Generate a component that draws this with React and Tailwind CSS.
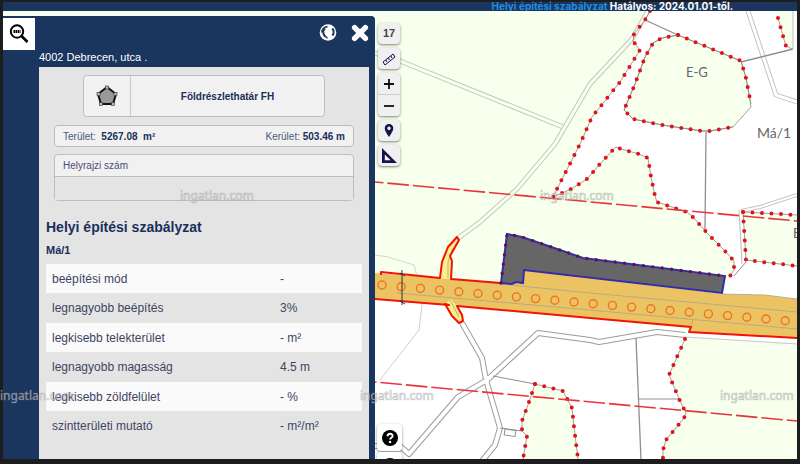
import { useState } from 'react';

const RULES = [
  { label: 'beépítési mód', value: '-' },
  { label: 'legnagyobb beépítés', value: '3%' },
  { label: 'legkisebb telekterület', value: '- m²' },
  { label: 'legnagyobb magasság', value: '4.5 m' },
  { label: 'legkisebb zöldfelület', value: '- %' },
  { label: 'szintterületi mutató', value: '- m²/m²' },
];

const WATERMARKS = [
  { x: 180, y: 200 },
  { x: 540, y: 200 },
  { x: 0, y: 400 },
  { x: 360, y: 400 },
  { x: 720, y: 400 },
];

const GREEN = '#f7ffed';
const EG = '678,35 741,61 746,78 749,94 751,107 733,127 710,131 702,131 662,125 633,119 624,110 635,84 645,57 653,43 662,38';
const VALLEY = '650,11 645,20 634,34 633,41 640,50 620,82 592,117 580,144 557,189 553,197 571,189 587,179 600,164 613,150 616,147 621,149 639,154 648,158 651,177 655,196 657,202 669,206 678,209 687,212 694,218 707,233 727,253 734,261 734,270 730,276';

// a zone border: thin grey line with evenly spaced red dots on it
function Dotted({ points }) {
  return (
    <g fill="none">
      <polyline points={points} stroke="#8a8a80" strokeWidth="0.8" />
      <polyline points={points} stroke="#e3111b" strokeWidth="4" strokeLinecap="round" strokeDasharray="0 9.5" />
    </g>
  );
}

// a road: wide grey line with the ground colour laid over it
function Road({ points, edge = '#c3c6bd', ground = GREEN, width = 5 }) {
  return (
    <g fill="none" strokeLinejoin="round">
      <polyline points={points} stroke={edge} strokeWidth={width} />
      <polyline points={points} stroke={ground} strokeWidth={width - 2} />
    </g>
  );
}

function ZoningMap() {
  const trees = Array.from({ length: 22 }, (_, i) => i);
  return (
    <svg
      className="absolute inset-0 h-full w-full"
      viewBox="3 11 794 448"
      preserveAspectRatio="xMinYMin slice"
      role="img"
      aria-label="Szabályozási térkép"
    >
      <rect x="3" y="11" width="794" height="448" fill={GREEN} />

      {/* white zones */}
      <polygon points={`${VALLEY} 724,294 797,299 797,11`} fill="#fff" />
      <polygon points="3,285 375,299 590,318 689,330 685,339 669,375 686,413 664,443 663,459 3,459" fill="#fff" />
      <polygon points="689,330 797,338 797,343 685,338" fill="#fff" />

      {/* green patches inside the white ones */}
      <polygon points={EG} fill={GREEN} />
      <polygon points="775,11 778,18 786,46 793,49 793,11" fill={GREEN} />
      <polygon points="743,212 797,216 797,266 746,260" fill={GREEN} />
      <polygon points="535,384 563,391 572,408 578,459 523,459 527,436 522,431 522,421" fill={GREEN} />

      <Road points="375,53 400,61 563,127" />
      <Road points="457,239 480,222 517,189 555,144 590,84 632,39 648,11" />
      <Road points="748,11 776,95 797,102" ground="#fff" />
      <Road points="741,211 760,207 797,195" ground="#fff" width={4} />
      <polyline points="739,210 742,264" fill="none" stroke="#bbb" />
      <Road points="462,323 482,358 486,380 500,428 495,445 482,461" edge="#9c9c9c" ground="#fff" width={6} />
      <Road points="375,446 400,446 409,454 458,397 487,380 538,333 590,340 599,342 657,332 685,335" edge="#9c9c9c" ground="#fff" width={6} />
      <polyline points="486,376 487,384" stroke="#fff" strokeWidth="4" />

      <g fill="none" stroke="#8f8f8f">
        <polyline points="645,20 678,35" strokeWidth="1.3" />
        <polyline points="741,62 793,49" strokeWidth="1.3" />
        <polyline points="706,132 705,229" strokeWidth="1.3" />
        <polyline points="793,11 793,49" stroke="#c3c6bd" />
        <polyline points="746,262 734,276" />
        <polyline points="636,338 641,460" strokeWidth="1.3" />
        <polyline points="638,399 679,399" />
        <polyline points="493,376 535,384" />
        <polyline points="500,428 522,431" />
        <rect x="505" y="429" width="11" height="6" transform="rotate(8 505 429)" />
        <polyline points="375,255 388,257 414,265 417,276" stroke="#d4d8cc" />
        <polyline points="423,297 419,330 380,380" stroke="#d0d0d0" />
        <polyline points="685,337 797,344" stroke="#c8c8c8" />
      </g>

      <Dotted points={VALLEY} />
      <polygon points={EG} fill="none" stroke="#8a8a80" strokeWidth="0.8" />
      <Dotted points="678,35 741,61 746,78 749,94 751,104" />
      <Dotted points="678,35 662,38 653,43 645,57 635,84 624,110 633,119 662,125 702,131 710,131 733,127" />
      <Dotted points="778,18 783,36 786,46 792,49" />
      <Dotted points="743,212 797,215" />
      <Dotted points="743,212 746,260 797,266" />
      <Dotted points="685,339 669,375 680,401 686,413 684,418 666,440 663,450 663,459" />
      <Dotted points="535,384 563,391 572,408 574,427 578,459" />
      <Dotted points="535,384 529,402 522,421 522,431 527,436 523,459" />

      {/* main road */}
      <polygon points="375,273 501,283 523,283 524,270 723,294 765,295 797,299 797,338 689,332 691,327 590,318 443,305 375,299" fill="#ecc363" />
      <g fill="none" stroke="#aaa58c" strokeWidth="0.8">
        <polyline points="451,279 590,293 797,312" />
        <polyline points="397,293 590,310 797,329" />
        <polyline points="691,327 693,320" />
        <polyline points="723,294 765,295 797,299" />
      </g>
      <polygon points="457,237 459,240 450,256 452,261 451,279 440,278 442,262 448,247" fill="#faee8c" />
      <polygon points="445,304 452,316 459,323 463,321 462,315 457,307 451,299" fill="#faee8c" />
      <path d="M448 278V262l5-14M450 300l9 17" fill="none" stroke="#a9a173" strokeWidth="0.8" />
      <g fill="none" stroke="#f31208" strokeWidth="2" strokeLinejoin="round">
        <polyline points="381,275 381,272 440,278 442,262 448,247 457,237 459,240 450,256 452,261 451,279 501,283" />
        <polyline points="375,299 449,305 445,304 452,316 459,323 463,321 462,315 457,306 590,318 691,327 689,332 797,338" />
      </g>
      <g fill="none" stroke="#ee7421" strokeWidth="1.4">
        {trees.map((i) => (
          <circle key={i} cx={382 + i * 19.2} cy={285 + i * 1.7} r="4" />
        ))}
      </g>
      <path d="M402 270V305M400 273l5 3M400 301l5 3" fill="none" stroke="#333" />

      {/* selected parcel */}
      <polygon points="507,234 522,237 560,250 583,258 725,276 722,293 524,270 523,283 516,282 512,284 501,283" fill="#666" stroke="#342ca8" strokeWidth="2" />
      <polyline points="501,283 507,234 522,237 560,250 583,258 725,276" fill="none" stroke="#64104f" strokeWidth="3.4" strokeLinecap="round" strokeDasharray="0 9.5" />

      <g stroke="#ec333a" strokeWidth="1.6" strokeDasharray="21.5 4" fill="none">
        <polyline points="375,182 797,221" strokeDashoffset="13" />
        <polyline points="375,382 797,421" strokeDashoffset="20" />
      </g>

      <g fill="#666" fontFamily="Lato, sans-serif">
        <text x="686" y="77" fontSize="13">E-G</text>
        <text x="757" y="138" fontSize="14">Má/1</text>
        <text x="793" y="238" fontSize="13">E</text>
      </g>
    </svg>
  );
}

function ToolButton({ label, children, className = '' }) {
  return (
    <button
      type="button"
      aria-label={label}
      className={`flex h-[21px] w-[22px] items-center justify-center bg-[#f0f0f0] text-[#15134a] ${className}`}
    >
      {children}
    </button>
  );
}

function MapTools() {
  return (
    <div className="absolute top-3 left-[375px] flex flex-col gap-1">
      <div className="flex h-[21px] w-[22px] items-center justify-center rounded-sm bg-[#f0f0f0] text-[11px] font-bold text-[#444] shadow-sm shadow-black/40">17</div>
      <ToolButton label="Távolságmérés" className="rounded-sm shadow-sm shadow-black/40">
        <svg viewBox="0 0 16 16" className="size-4" fill="none" stroke="currentColor">
          <path d="M2 11 12 3l2 3L4 14zM5 9l1 2M7.500 7l1 2M10 5l1 2" />
        </svg>
      </ToolButton>
      <div className="flex flex-col rounded-sm bg-[#f0f0f0] pt-px shadow-sm shadow-black/40">
        <ToolButton label="Nagyítás" className="rounded-t-sm border-b border-[#ccc]">
          <svg viewBox="0 0 10 10" className="size-[10px]" stroke="#111" strokeWidth="1.8"><path d="M5 0v10M0 5h10" /></svg>
        </ToolButton>
        <ToolButton label="Kicsinyítés" className="rounded-b-sm">
          <svg viewBox="0 0 10 10" className="size-[10px]" stroke="#111" strokeWidth="1.8"><path d="M0 5h10" /></svg>
        </ToolButton>
      </div>
      <ToolButton label="Helyzetem" className="rounded-sm shadow-sm shadow-black/40">
        <svg viewBox="0 0 10 14" className="h-[13px] w-[10px]" fill="currentColor">
          <path fillRule="evenodd" d="M5 0a4.600 4.600 0 0 0-4.600 4.700C.4 8 5 14 5 14s4.600-6 4.600-9.300A4.600 4.600 0 0 0 5 0zm0 2.800a1.900 1.900 0 1 1 0 3.800 1.900 1.900 0 0 1 0-3.800z" />
        </svg>
      </ToolButton>
      <ToolButton label="Területmérés" className="rounded-sm shadow-sm shadow-black/40">
        <svg viewBox="0 0 16 16" className="size-4" fill="currentColor">
          <path fillRule="evenodd" d="M1 0v15h15zM3.800 6.500 9.800 12.300h-6z" />
        </svg>
      </ToolButton>
    </div>
  );
}

function HelpButtons() {
  return (
    <div className="absolute top-[413px] left-[374px] flex flex-col gap-px">
      {['Súgó', 'Információ'].map((name) => (
        <button key={name} type="button" aria-label={name} className="flex h-[27px] w-[25px] items-center justify-center rounded-sm bg-white shadow-sm shadow-black/40">
          <svg viewBox="0 0 16 16" className="size-4">
            <circle cx="8" cy="8" r="8" fill="#000" />
            <path d="M5.500 6.200C5.500 3 10.600 3 10.600 6c0 1.700-2.500 1.800-2.500 3.600" fill="none" stroke="#fff" strokeWidth="1.900" />
            <circle cx="8.100" cy="12" r="1.200" fill="#fff" />
          </svg>
        </button>
      ))}
    </div>
  );
}

function InfoPanel({ onClose }) {
  return (
    <section className="absolute top-[5px] bottom-0 left-0 flex w-[372px] flex-col rounded-tr-sm bg-[#1a355e] pr-[6px]">
      <header className="flex h-[51px] shrink-0 justify-between">
        <div className="flex items-end gap-1">
          <button type="button" aria-label="Keresés" className="mt-[2px] flex h-8 w-8 items-center justify-center self-start bg-white">
            <svg viewBox="0 0 20 20" className="size-5" fill="none" stroke="#000">
              <circle cx="8" cy="7.500" r="6.200" strokeWidth="2" />
              <path d="m12.500 12 6 6" strokeWidth="2.600" />
              <path d="M4.500 7.500h7" strokeWidth="3" strokeDasharray="1.500 0.500" />
            </svg>
          </button>
          <h1 className="pb-[2px] text-[11px] leading-4 text-white">4002 Debrecen, utca .</h1>
        </div>
        <div className="flex items-start gap-[14px] pt-2">
          <button type="button" aria-label="Térkép">
            <svg viewBox="0 0 18 18" className="size-[18px]" fill="none" stroke="#1a355e">
              <circle cx="9" cy="8.500" r="8.300" fill="#fff" stroke="none" />
              <path d="M8.500 2.600C5 3 2.700 5.500 2.800 8.500" strokeWidth="1.600" />
              <path d="M6 4.500 4.200 7l.3 3.200 2 2.600" strokeWidth="2" />
              <path d="M13.300 4.500c1.500 1.700 1.900 4.800.2 7.200" strokeWidth="2.200" />
              <path d="m6.500 12.500 2 1.800" strokeWidth="1.400" />
            </svg>
          </button>
          <button type="button" aria-label="Bezárás" onClick={onClose}>
            <svg viewBox="0 0 18 18" className="size-[18px]" stroke="#fff" strokeWidth="5.400" strokeLinecap="round">
              <path d="m3.600 3.600 10.800 10.800m0-10.800L3.600 14.400" />
            </svg>
          </button>
        </div>
      </header>

      <div className="ml-9 min-h-0 flex-1 overflow-hidden bg-[#e4e4e4] pt-2 pr-[7px] pl-[7px] text-[#1a2f5a]">
        <div className="px-2">
          <button type="button" className="mr-[29px] ml-[29px] flex h-[42px] w-[242px] items-stretch rounded-sm border border-[#bdbdbd] bg-[#f1f1f1] text-[10px] font-bold">
            <span className="flex w-[47px] items-center justify-center border-r border-[#c8c8c8]">
              <svg viewBox="0 0 22 22" className="size-[22px]">
                <path d="m11 2 9 7-3 10H5L2 9z" fill="#999" stroke="#111" strokeWidth="2" />
                <g fill="#bbb" stroke="#333" strokeWidth="0.6">
                  <rect x="9.500" y="1" width="3" height="3" />
                  <rect x="18" y="7.500" width="3" height="3" />
                  <rect x="15.500" y="17.500" width="3" height="3" />
                  <rect x="3.500" y="17.500" width="3" height="3" />
                  <rect x="1" y="7.500" width="3" height="3" />
                </g>
              </svg>
            </span>
            <span className="flex flex-1 items-center justify-center">Földrészlethatár FH</span>
          </button>

          <div className="mt-2 flex h-[22px] items-center justify-between rounded-sm border border-[#bdbdbd] bg-[#f1f1f1] px-2 text-[10px]">
            <span className="whitespace-pre text-[#4a5a78]">Terület:  <b className="text-[#1a2f5a]">5267.08  m²</b></span>
            <span className="text-[#4a5a78]">Kerület: <b className="text-[#1a2f5a]">503.46 m</b></span>
          </div>

          <div className="mt-[7px] rounded-sm border border-[#bdbdbd] bg-[#f1f1f1] text-[10px] text-[#4a4a78]">
            <label htmlFor="hrsz" className="flex h-[21px] items-center px-2">Helyrajzi szám</label>
            <input id="hrsz" readOnly className="block h-6 w-full border-t border-[#bdbdbd] bg-[#e4e4e4] px-2" />
          </div>
        </div>

        <h2 className="mt-4 text-[14px] leading-5 font-bold">Helyi építési szabályzat</h2>
        <h3 className="mt-[5px] mb-[6px] text-[11px] leading-4 font-bold">Má/1</h3>
        <table className="w-full text-left text-[12px] text-[#3d4463]">
          <tbody>
            {RULES.map((rule) => (
              <tr key={rule.label} className="h-[30px] odd:h-[29px] odd:bg-[#fafafa]">
                <th scope="row" className="w-[228px] pl-[6px] font-normal">{rule.label}</th>
                <td className="pl-[6px]">{rule.value}</td>
              </tr>
            ))}
          </tbody>
        </table>
      </div>
    </section>
  );
}

export default function App() {
  const [open, setOpen] = useState(true);

  return (
    <div className="relative flex h-screen flex-col overflow-hidden bg-[#1d1c1f] px-[3px] pt-[2px] pb-[5px] font-['Liberation_Sans',Arial,sans-serif]">
      <header className="flex h-[9px] shrink-0 items-center justify-end bg-[#1a355e] pr-16 font-[Inter,sans-serif] text-[10px] leading-[9px] font-bold whitespace-nowrap text-white">
        <p><span className="text-[#1e8fe0]">Helyi építési szabályzat</span> Hatályos: 2024.01.01-től.</p>
      </header>
      <main className="relative min-h-0 flex-1 overflow-hidden">
        <ZoningMap />
        <MapTools />
        <HelpButtons />
        {open && <InfoPanel onClose={() => setOpen(false)} />}
      </main>
      <svg className="pointer-events-none absolute top-0 left-0 h-[464px] w-[800px]" aria-hidden="true">
        <g fill="#fff" fillOpacity="0.5" stroke="#888" strokeOpacity="0.5" strokeWidth="0.7" fontFamily="Noto Sans, sans-serif" fontSize="12" fontWeight="400">
          {WATERMARKS.map((mark) => (
            <text key={`${mark.x}-${mark.y}`} x={mark.x} y={mark.y}>ingatlan.com</text>
          ))}
        </g>
      </svg>
    </div>
  );
}
